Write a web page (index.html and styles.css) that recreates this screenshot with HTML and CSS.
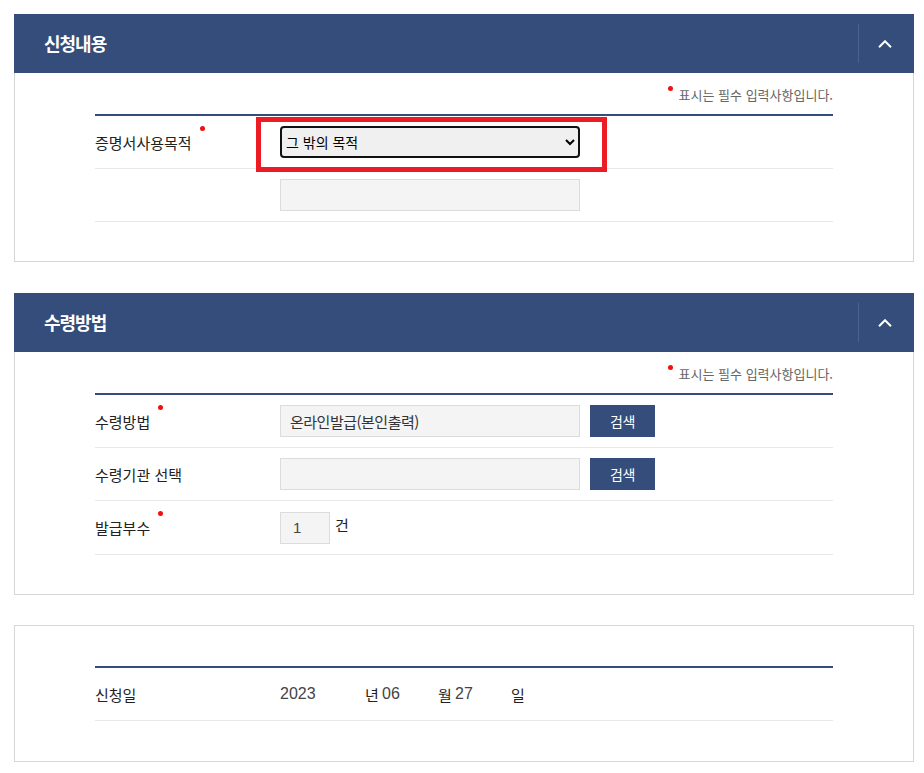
FILE: index.html
```html
<!DOCTYPE html>
<html lang="ko">
<head>
<meta charset="utf-8">
<title>신청내용</title>
<link rel="stylesheet" href="styles.css">
</head>
<body>
<div class="page">

  <section class="panel">
    <div class="panel-head">
      <h2 class="panel-title">신청내용</h2>
      <button class="toggle" type="button" aria-label="접기">
        <svg width="14" height="8" viewBox="0 0 14 8"><path d="M1 7.2 L7 1.2 L13 7.2" fill="none" stroke="#fff" stroke-width="2"/></svg>
      </button>
    </div>
    <div class="panel-body">
      <p class="req-note"><span class="dot note-dot"></span>표시는 필수 입력사항입니다.</p>
      <div class="form-table">
        <div class="row">
          <div class="label">증명서사용목적<span class="dot"></span></div>
          <div class="field">
            <span class="hl-wrap">
              <select class="select"><option>그 밖의 목적</option></select>
              <span class="highlight"></span>
            </span>
          </div>
        </div>
        <div class="row">
          <div class="label"></div>
          <div class="field"><span class="input w300"></span></div>
        </div>
      </div>
    </div>
  </section>

  <section class="panel">
    <div class="panel-head">
      <h2 class="panel-title">수령방법</h2>
      <button class="toggle" type="button" aria-label="접기">
        <svg width="14" height="8" viewBox="0 0 14 8"><path d="M1 7.2 L7 1.2 L13 7.2" fill="none" stroke="#fff" stroke-width="2"/></svg>
      </button>
    </div>
    <div class="panel-body">
      <p class="req-note"><span class="dot note-dot"></span>표시는 필수 입력사항입니다.</p>
      <div class="form-table">
        <div class="row">
          <div class="label">수령방법<span class="dot"></span></div>
          <div class="field">
            <span class="input w300">온라인발급(본인출력)</span>
            <button class="btn" type="button">검색</button>
          </div>
        </div>
        <div class="row">
          <div class="label">수령기관 선택</div>
          <div class="field">
            <span class="input w300"></span>
            <button class="btn" type="button">검색</button>
          </div>
        </div>
        <div class="row row-tall">
          <div class="label">발급부수<span class="dot"></span></div>
          <div class="field">
            <span class="input w50 num">1</span><span class="unit-gun">건</span>
          </div>
        </div>
      </div>
    </div>
  </section>

  <section class="panel panel-plain">
    <div class="panel-body">
      <p class="req-note empty"></p>
      <div class="form-table">
        <div class="row">
          <div class="label">신청일</div>
          <div class="field date">
            <span class="d-num w-year">2023</span><span class="d-unit">년</span><span class="d-num w-md">06</span><span class="d-unit">월</span><span class="d-num w-md">27</span><span class="d-unit">일</span>
          </div>
        </div>
      </div>
    </div>
  </section>

</div>
</body>
</html>
```

FILE: styles.css
```css
* { box-sizing: border-box; }

html, body {
  margin: 0;
  padding: 0;
  background: #ffffff;
}

body {
  font-family: "Noto Sans CJK KR", "Noto Sans", sans-serif;
  color: #222;
}

.page {
  width: 900px;
  margin: 0 0 0 14px;
  padding-top: 14px;
}

.panel + .panel {
  margin-top: 31px;
}

.panel + .panel-plain {
  margin-top: 30px;
}

.panel-head {
  height: 59px;
  background: #344d7a;
  display: flex;
  align-items: center;
  justify-content: space-between;
}

.panel-title {
  margin: -1px 0 0 30px;
  font-size: 18px;
  font-weight: 700;
  letter-spacing: -1px;
  color: #fff;
  line-height: 1;
}

.toggle {
  width: 56px;
  height: 39px;
  padding: 0 3px 0 0;
  margin: 0;
  border: 0;
  border-left: 1px solid #4b6290;
  background: transparent;
  display: flex;
  align-items: center;
  justify-content: center;
}

.panel-body {
  border: 1px solid #d6d6d6;
  border-top: 0;
  padding: 0 80px 39px;
}

.panel-plain .panel-body {
  border-top: 1px solid #d6d6d6;
  padding-bottom: 40px;
}

.req-note {
  margin: 0;
  padding: 12px 0 9px;
  height: 41px;
  line-height: 20px;
  text-align: right;
  font-size: 13px;
  letter-spacing: 0;
  color: #666;
}

.req-note.empty {
  height: 40px;
  padding: 0;
}

.dot {
  display: inline-block;
  width: 5px;
  height: 5px;
  border-radius: 50%;
  background: #ee1111;
  margin-left: 8px;
  vertical-align: middle;
  position: relative;
  top: -14px;
}

.note-dot {
  margin-left: 0;
  margin-right: 6px;
  top: -8px;
}

.form-table {
  border-top: 2px solid #344d7a;
}

.row {
  display: grid;
  grid-template-columns: 185px 1fr;
  min-height: 53px;
  border-bottom: 1px solid #e8e8e8;
}

.row-tall {
  min-height: 54px;
}

.label {
  display: flex;
  align-items: center;
  font-size: 15px;
  letter-spacing: 0;
  color: #222;
}

.field {
  display: flex;
  align-items: center;
  gap: 10px;
}

.hl-wrap {
  position: relative;
  display: inline-block;
}

.select {
  display: block;
  width: 300px;
  height: 32px;
  margin: 0;
  padding: 0;
  border: 2px solid #111;
  border-radius: 4px;
  background: #f0f0f0;
  font-family: "Noto Sans CJK KR", sans-serif;
  font-size: 14px;
  color: #000;
}

.highlight {
  position: absolute;
  left: -24px;
  top: -9px;
  width: 351px;
  height: 55px;
  border: 5px solid #ed1c24;
  pointer-events: none;
}

.input {
  display: inline-flex;
  align-items: center;
  height: 32px;
  padding: 0 9px;
  background: #f4f4f4;
  border: 1px solid #dcdcdc;
  font-size: 15px;
  letter-spacing: -0.5px;
  color: #333;
}

.w300 { width: 300px; }
.w50 { width: 50px; padding: 0 12px; }

.num {
  font-family: "Liberation Sans", Arial, sans-serif;
  font-size: 15px;
  letter-spacing: 0;
  color: #444;
}

.unit-gun {
  font-size: 15px;
  margin-left: -5px;
  align-self: flex-start;
  margin-top: 13px;
  color: #222;
}

.btn {
  width: 65px;
  height: 32px;
  margin: 0;
  padding: 0;
  border: 0;
  background: #344d7a;
  color: #fff;
  font-family: "Noto Sans CJK KR", sans-serif;
  font-size: 14px;
  letter-spacing: -0.5px;
}

.date {
  gap: 0;
}

.d-num {
  font-family: "Liberation Sans", Arial, sans-serif;
  font-size: 16px;
  color: #444;
}

.w-year { width: 85px; }
.w-md { width: 56px; }

.d-unit {
  width: 14px;
  margin-right: 3px;
  font-size: 15px;
  letter-spacing: -1px;
  color: #222;
}
```
